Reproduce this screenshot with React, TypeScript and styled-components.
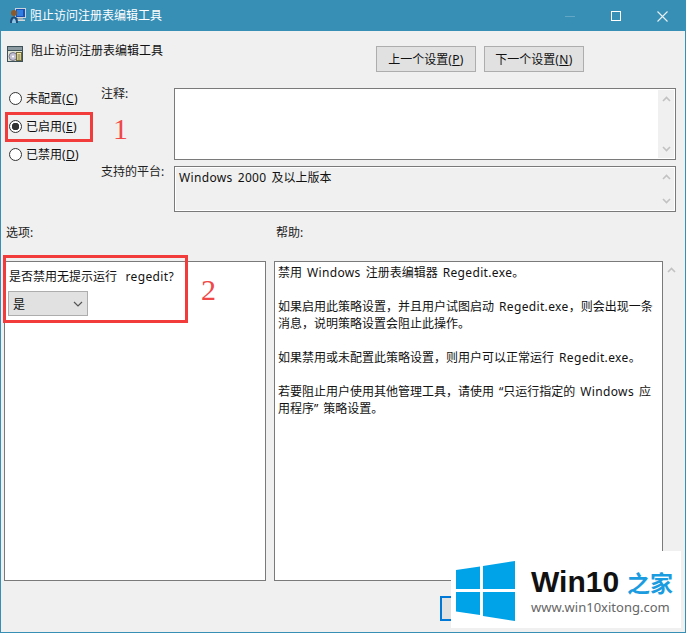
import styled, { createGlobalStyle } from "styled-components";

const GlobalStyle = createGlobalStyle`
  html, body { margin: 0; padding: 0; background: #fff; }
  body { font-family: "Noto Sans", "Noto Sans CJK SC", sans-serif; font-size: 12px; color: #111; }
`;

const HELP_LINES = [
  "禁用 Windows 注册表编辑器 Regedit.exe。",
  "",
  "如果启用此策略设置，并且用户试图启动 Regedit.exe，则会出现一条",
  "消息，说明策略设置会阻止此操作。",
  "",
  "如果禁用或未配置此策略设置，则用户可以正常运行 Regedit.exe。",
  "",
  "若要阻止用户使用其他管理工具，请使用 “只运行指定的 Windows 应",
  "用程序” 策略设置。",
];

// Latin runs are set wider than the CJK ones, as Segoe UI is in the dialog.
function Mixed({ text }: { text: string }) {
  return (
    <>
      {text.split(/([A-Za-z0-9.? ]+)/).map((part, i) =>
        /^[A-Za-z0-9.? ]+$/.test(part) ? <Latin key={i}>{part}</Latin> : part
      )}
    </>
  );
}

function Scrollbar({ inset }: { inset?: boolean }) {
  return (
    <ScrollTrack $inset={inset}>
      <svg width="9" height="6" viewBox="0 0 9 6"><path d="M1 5l3.500-3.500L8 5" fill="none" stroke="#c2c2c2" strokeWidth="1.600" /></svg>
      <svg width="9" height="6" viewBox="0 0 9 6"><path d="M1 1l3.500 3.500L8 1" fill="none" stroke="#c2c2c2" strokeWidth="1.600" /></svg>
    </ScrollTrack>
  );
}

function Radio({ checked, label, hotkey }: { checked?: boolean; label: string; hotkey: string }) {
  return (
    <RadioRow>
      <RadioDot $checked={checked} />
      <RadioText>{label}<Latin>(<u>{hotkey}</u>)</Latin></RadioText>
    </RadioRow>
  );
}

export default function App() {
  return (
    <>
      <GlobalStyle />
      <Window>
        <TitleBar>
          <svg width="18" height="16" viewBox="0 0 18 16">
            <rect x="6.500" y="0.500" width="10" height="9" fill="#1a4fb4" stroke="#c9d3da" />
            <rect x="8" y="2" width="6" height="6" fill="#2f7fe0" />
            <rect x="9" y="10" width="5" height="1.500" fill="#9aa6ad" />
            <rect x="7" y="11.500" width="9" height="1.500" fill="#d4d8da" />
            <circle cx="5" cy="5" r="3" fill="#8a5a2c" />
            <path d="M1 15c0-4.500 1.500-6.500 4-6.500s4 2 4 6.500z" fill="#1f4a78" />
            <path d="M3 15c0-3 1-4.500 2-4.500s2 1.500 2 4.500z" fill="#8cc4e6" />
          </svg>
          <TitleText>阻止访问注册表编辑工具</TitleText>
          <WindowControls>
            <MinGlyph />
            <MaxGlyph />
            <svg width="11" height="11" viewBox="0 0 11 11"><path d="M.5.5l10 10M10.500.5l-10 10" stroke="#e8f1f6" strokeWidth="1.100" /></svg>
          </WindowControls>
        </TitleBar>

        <Body>
          <HeaderRow>
            <svg width="16" height="16" viewBox="0 0 16 16">
              <rect x="0" y="0" width="16" height="16" fill="#3d5258" />
              <rect x="1" y="1" width="14" height="3" fill="#8a9aa0" />
              <rect x="1" y="5" width="14" height="10" fill="#dfe3d2" />
              <circle cx="6" cy="10.500" r="4" fill="#c3bfd2" stroke="#77778a" />
              <circle cx="6" cy="10.500" r="1.100" fill="#fff" />
              <rect x="9.500" y="6.500" width="5" height="8" fill="#f2e8a8" stroke="#6e6a40" />
              <path d="M10.500 9h3M10.500 11h3M10.500 13h3" stroke="#6e6a40" />
            </svg>
            <HeaderTitle>阻止访问注册表编辑工具</HeaderTitle>
            <NavButtons>
              <PushButton>上一个设置<Latin>(<u>P</u>)</Latin></PushButton>
              <PushButton>下一个设置<Latin>(<u>N</u>)</Latin></PushButton>
            </NavButtons>
          </HeaderRow>

          <SettingsGrid>
            <RadioGroup>
              <Radio label="未配置" hotkey="C" />
              <Radio checked label="已启用" hotkey="E" />
              <Radio label="已禁用" hotkey="D" />
            </RadioGroup>
            <FieldLabel>注释:</FieldLabel>
            <FieldBox $white>
              <Scrollbar inset />
            </FieldBox>
            <FieldLabel>支持的平台:</FieldLabel>
            <FieldBox>
              <PlatformText><Mixed text="Windows 2000 及以上版本" /></PlatformText>
              <Scrollbar inset />
            </FieldBox>
          </SettingsGrid>

          <SectionLabels>
            <span>选项:</span>
            <span>帮助:</span>
          </SectionLabels>

          <Panels>
            <OptionsPanel>
              <Question><Mixed text="是否禁用无提示运行 regedit?" /></Question>
              <Select>
                <span>是</span>
                <svg width="10" height="6" viewBox="0 0 10 6"><path d="M1 1l4 4 4-4" fill="none" stroke="#555" strokeWidth="1.200" /></svg>
              </Select>
            </OptionsPanel>
            <HelpColumn>
              <HelpPanel>
                {HELP_LINES.map((line, i) => <HelpLine key={i}><Mixed text={line} /></HelpLine>)}
              </HelpPanel>
              <Scrollbar />
            </HelpColumn>
          </Panels>

          <Footer>
            <DefaultButton>确定</DefaultButton>
          </Footer>
        </Body>

        <MarkBox $left={5} $top={112} $width={88} $height={30} />
        <MarkBox $left={3} $top={255} $width={185} $height={68} />
        <MarkNumber $left={113} $top={111}>1</MarkNumber>
        <MarkNumber $left={201} $top={272}>2</MarkNumber>

        <Watermark>
          <svg width="60" height="60" viewBox="0 0 60 60">
            <path d="M0 9l24-3.500V28H0zM27 5L59 0v28H27zM0 31h24v23L0 50.500zM27 31h32v29l-32-5z" fill="#00a2e8" />
          </svg>
          <WatermarkText>
            <BrandLine>Win10<BrandCn>之家</BrandCn></BrandLine>
            <BrandUrl>www.win10xitong.com</BrandUrl>
          </WatermarkText>
        </Watermark>
      </Window>
    </>
  );
}

const Latin = styled.span`
  letter-spacing: 0.35px;
  word-spacing: 1.5px;
`;

const Window = styled.div`
  position: relative;
  box-sizing: border-box;
  width: 686px;
  height: 633px;
  border: 1px solid #388fb6;
  background: #f0f0f0;
  overflow: hidden;
`;

const TitleBar = styled.div`
  display: flex;
  align-items: center;
  height: 30px;
  padding-left: 8px;
  background: #388fb6;
`;

const TitleText = styled.span`
  margin-left: 3px;
  margin-top: -2px;
  color: #fff;
`;

const WindowControls = styled.div`
  display: flex;
  align-items: center;
  margin-left: auto;
  margin-right: 17px;
  gap: 35px;
`;

const MinGlyph = styled.i`
  display: block;
  width: 10px;
  height: 1px;
  margin-right: 1px;
  background: #63a7c6;
`;

const MaxGlyph = styled.i`
  display: block;
  box-sizing: border-box;
  width: 10px;
  height: 10px;
  margin-right: 1px;
  border: 1px solid #fff;
`;

const Body = styled.div`
  padding: 15px 0 0 3px;
`;

const HeaderRow = styled.div`
  display: flex;
  align-items: flex-start;
  height: 26px;
  padding-left: 3px;
`;

const HeaderTitle = styled.span`
  margin-left: 8px;
  margin-top: -1px;
  line-height: 11px;
`;

const NavButtons = styled.div`
  display: flex;
  gap: 8px;
  margin-left: auto;
  margin-right: 101px;
`;

const PushButton = styled.button`
  box-sizing: border-box;
  width: 100px;
  height: 26px;
  padding: 0;
  border: 1px solid #adadad;
  background: #e1e1e1;
  color: #111;
  font: inherit;
`;

const SettingsGrid = styled.div`
  display: grid;
  grid-template-columns: 97px 73px 502px;
  grid-template-rows: 72px 46px;
  row-gap: 6px;
  margin-top: 16px;
`;

const RadioGroup = styled.div`
  grid-row: 1 / span 2;
  display: flex;
  flex-direction: column;
  gap: 11px;
  padding: 2px 0 0 5px;
`;

const RadioRow = styled.label`
  display: flex;
  align-items: center;
  gap: 4px;
  height: 17px;
`;

const RadioText = styled.span`
  margin-top: -1px;
`;

const RadioDot = styled.i<{ $checked?: boolean }>`
  box-sizing: border-box;
  display: block;
  width: 13px;
  height: 13px;
  border: 1px solid #333;
  border-radius: 50%;
  background: ${({ $checked }) => ($checked ? "radial-gradient(circle, #333 0 3.5px, #fff 4px)" : "#fff")};
`;

const FieldLabel = styled.span`
  margin-top: -3px;
  line-height: 17px;
  white-space: nowrap;
  color: #222;
`;

const FieldBox = styled.div<{ $white?: boolean }>`
  display: flex;
  justify-content: space-between;
  box-sizing: border-box;
  border: 1px solid #7a7a7a;
  background: ${({ $white }) => ($white ? "#fff" : "#f0f0f0")};
  box-shadow: inset 0 0 0 1px #fff;
`;

const PlatformText = styled.span`
  padding: 2px 0 0 4px;
  line-height: 17px;
`;

const ScrollTrack = styled.div<{ $inset?: boolean }>`
  display: flex;
  flex-direction: column;
  align-items: center;
  justify-content: space-between;
  box-sizing: border-box;
  width: 16px;
  margin: ${({ $inset }) => ($inset ? "1px 1px 1px auto" : "0")};
  padding: 6px 0;
  background: #f0f0f0;
`;

const SectionLabels = styled.div`
  display: grid;
  grid-template-columns: 270px 1fr;
  margin-top: 12px;
  padding-left: 2px;
  line-height: 17px;
  color: #222;
`;

const Panels = styled.div`
  display: grid;
  grid-template-columns: 262px 405px;
  column-gap: 8px;
  height: 320px;
  margin-top: 20px;
`;

const OptionsPanel = styled.div`
  box-sizing: border-box;
  border: 1px solid #7a7a7a;
  background: #fff;
  padding: 6px 4px;
`;

const Question = styled.div`
  line-height: 17px;

  /* the space before "regedit" is a wide one in this prompt */
  span {
    word-spacing: 5px;
  }
`;

const Select = styled.div`
  display: flex;
  align-items: center;
  justify-content: space-between;
  box-sizing: border-box;
  width: 80px;
  height: 25px;
  margin-top: 6px;
  margin-left: -1px;
  padding: 0 4px;
  border: 1px solid #adadad;
  background: #e1e1e1;
`;

const HelpColumn = styled.div`
  display: flex;
`;

const HelpPanel = styled.div`
  flex: 1;
  box-sizing: border-box;
  border: 1px solid #7a7a7a;
  background: #fff;
  padding: 2px 3px;
`;

const HelpLine = styled.div`
  height: 17px;
  line-height: 17px;
  white-space: nowrap;
`;

const Footer = styled.div`
  display: flex;
  margin-top: 15px;
  padding-left: 436px;
`;

const DefaultButton = styled.button`
  box-sizing: border-box;
  width: 75px;
  height: 25px;
  padding: 0;
  border: 2px solid #0078d7;
  background: #e1e1e1;
  font: inherit;
`;

const MarkBox = styled.div<{ $left: number; $top: number; $width: number; $height: number }>`
  position: absolute;
  left: ${({ $left }) => $left - 1}px;
  top: ${({ $top }) => $top - 1}px;
  box-sizing: border-box;
  width: ${({ $width }) => $width}px;
  height: ${({ $height }) => $height}px;
  border: 3px solid #f23c3c;
`;

const MarkNumber = styled.span<{ $left: number; $top: number }>`
  position: absolute;
  left: ${({ $left }) => $left - 1}px;
  top: ${({ $top }) => $top - 1}px;
  color: #f04848;
  font: 30px/36px "Liberation Serif", serif;
`;

const Watermark = styled.div`
  position: absolute;
  left: 450px;
  top: 550px;
  display: flex;
  align-items: center;
  gap: 15px;
  box-sizing: border-box;
  width: 230px;
  height: 77px;
  padding: 3px 0 0 5px;
  background: #fff;
`;

const WatermarkText = styled.div`
  display: flex;
  flex-direction: column;
`;

const BrandLine = styled.div`
  display: flex;
  align-items: center;
  font: bold 30px/30px "Liberation Sans", sans-serif;
  color: #111;
`;

const BrandCn = styled.span`
  margin-left: 8px;
  font: bold 23px/30px "Noto Sans CJK SC", sans-serif;
  color: #1c9ce0;
`;

const BrandUrl = styled.div`
  margin-top: 2px;
  font: 13px/16px "Noto Sans", sans-serif;
  color: #666;
`;
